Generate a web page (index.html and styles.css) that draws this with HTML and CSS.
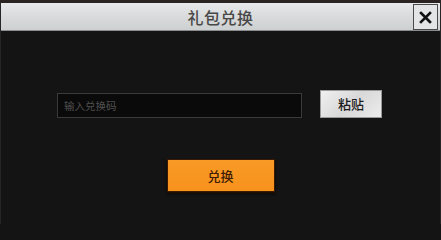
FILE: index.html
```html
<!DOCTYPE html>
<html lang="zh">
<head>
<meta charset="utf-8">
<title>礼包兑换</title>
<link rel="stylesheet" href="styles.css">
</head>
<body>
<div class="dialog">
  <div class="top-strip"></div>
  <div class="header">
    <span class="spacer"></span>
    <h1 class="title">礼包兑换</h1>
    <button class="close" aria-label="关闭">
      <svg width="13" height="13" viewBox="0 0 13 13"><path d="M2 2 L11 11 M11 2 L2 11" stroke="#111" stroke-width="2.6" stroke-linecap="square"/></svg>
    </button>
  </div>
  <div class="content">
    <div class="code-row">
      <div class="code-input">输入兑换码</div>
      <button class="paste">粘贴</button>
    </div>
    <button class="redeem">兑换</button>
  </div>
</div>
</body>
</html>
```

FILE: styles.css
```css
html, body {
  margin: 0;
  padding: 0;
  background: #141414;
}
body {
  width: 441px;
  height: 224px;
  overflow: hidden;
  font-family: "Noto Sans CJK SC", "Noto Sans", sans-serif;
}
.dialog {
  display: flex;
  flex-direction: column;
  height: 224px;
  box-sizing: border-box;
  border-left: 1px solid #262626;
  border-right: 1px solid #262626;
}
.top-strip {
  height: 3px;
  background: #2b2222;
}
.header {
  height: 28px;
  display: grid;
  grid-template-columns: 1fr auto 1fr;
  align-items: center;
  background: linear-gradient(#e6e8e9, #d6d8d9 60%, #cdd0d1);
  border-bottom: 1px solid #8a8c8d;
  box-sizing: border-box;
}
.title {
  margin: 0;
  font-size: 16px;
  font-weight: 500;
  color: #484848;
  letter-spacing: 0.5px;
  line-height: 28px;
}
.close {
  justify-self: end;
  margin-right: 2px;
  width: 25px;
  height: 26px;
  padding: 0;
  display: flex;
  align-items: center;
  justify-content: center;
  background: #e2e4e5;
  border: 1px solid #4a4a4a;
  box-sizing: border-box;
}
.content {
  display: flex;
  flex-direction: column;
  align-items: center;
}
.code-row {
  margin-top: 59px;
  display: flex;
  align-items: flex-end;
  gap: 18px;
  margin-left: 1px;
  margin-right: 3px;
}
.code-input {
  width: 245px;
  height: 25px;
  box-sizing: border-box;
  background: #0a0a0a;
  border: 1px solid #3a3a3a;
  color: #505050;
  font-size: 10.5px;
  line-height: 23px;
  padding-left: 6px;
}
.paste {
  width: 62px;
  height: 28px;
  padding: 0;
  box-sizing: border-box;
  background: linear-gradient(135deg, #f0f0f0, #d8d8d8 50%, #ececec);
  border: 1px solid #9a9a9a;
  color: #1c1c1c;
  font-family: inherit;
  font-size: 13px;
  font-weight: 500;
  line-height: 26px;
}
.redeem {
  margin-top: 41px;
  width: 108px;
  height: 33px;
  padding: 0;
  box-sizing: border-box;
  background: linear-gradient(#f99a26, #f7921c);
  border: 1px solid #3a1a04;
  box-shadow: 0 1px 0 #1e0d02, 0 2px 2px #0e0804;
  color: #3f1d05;
  font-family: inherit;
  font-size: 13px;
  font-weight: 500;
  line-height: 31px;
}
```
